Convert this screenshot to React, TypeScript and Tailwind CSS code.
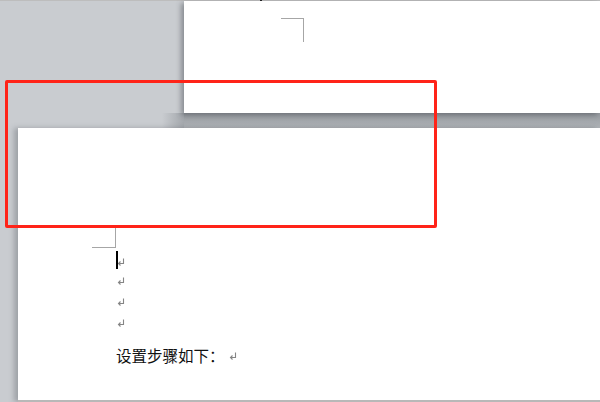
import React from "react";

function Ret({ className = "" }: { className?: string }) {
  return (
    <svg width="8" height="8" viewBox="0 0 8 8" className={className}>
      <path d="M6.5 0.5 V5.5 H1.5" fill="none" stroke="#858585" strokeWidth="1.1" />
      <path d="M3.5 3.5 L1.5 5.5 L3.5 7.5" fill="none" stroke="#858585" strokeWidth="1.1" />
    </svg>
  );
}

export default function App() {
  return (
    <div
      className="relative w-[600px] h-[402px] overflow-hidden bg-[#c9ccd0] flex flex-col"
      style={{ fontFamily: '"Noto Sans CJK SC", "Noto Sans", sans-serif' }}
    >
      <div className="h-px w-full bg-[#bdbdbd] shrink-0 flex">
        <div className="ml-[260px] w-[2px] h-px bg-[#222]" />
      </div>
      {/* top page */}
      <div className="ml-[184px] h-[112px] shrink-0 bg-white shadow-[-3px_2px_5px_rgba(60,65,72,0.45)] relative z-10">
        <div className="ml-[97px] mt-[17px] w-[23px] h-[24px] border-t border-r border-[#a6a6a6]" />
      </div>
      {/* band between pages */}
      <div className="h-[15px] shrink-0 ml-[162px] flex">
        <div className="w-[22px] h-full bg-gradient-to-r from-[#c9ccd0] to-[#a3a7ac]" />
        <div className="flex-1 h-full bg-gradient-to-b from-[#969a9f] to-[#afb3b7]" />
      </div>
      {/* bottom page */}
      <div className="ml-[18px] flex-1 bg-white border-b-2 border-[#b8b8b8] shadow-[-4px_0_5px_rgba(80,85,92,0.35)] relative z-10">
        <div className="ml-[74px] mt-[97px] w-[24px] h-[23px] border-r border-b border-[#a6a6a6]" />
        <div className="ml-[98px] flex flex-col">
          <div className="h-[21px] flex items-center relative">
            <div className="absolute left-0 top-[3px] w-[2px] h-[18px] bg-black" />
            <Ret className="ml-[1px] mt-[6px]" />
          </div>
          <div className="h-[21px] flex items-center">
            <Ret className="ml-[1px] mt-[3px]" />
          </div>
          <div className="h-[21px] flex items-center">
            <Ret className="ml-[1px] mt-[3px]" />
          </div>
          <div className="h-[21px] flex items-center">
            <Ret className="ml-[1px] mt-[3px]" />
          </div>
          <div className="mt-[13px] flex items-center text-[15.5px] leading-[20px] text-[#111]">
            <span>设置步骤如下：</span>
            <Ret className="ml-[4px] mt-[2px]" />
          </div>
        </div>
      </div>
      {/* red annotation */}
      <div className="absolute left-[5px] top-[80px] w-[432px] h-[148px] border-[3px] border-[#ff2318] rounded-[2px] z-20" />
    </div>
  );
}
